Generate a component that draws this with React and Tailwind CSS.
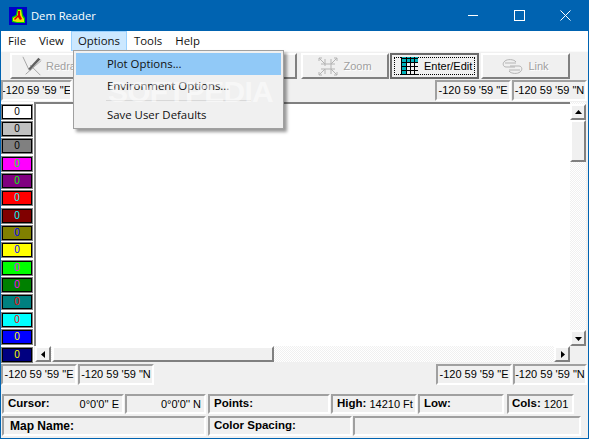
const swatches = [
  ["bg-[#ffffff]", "text-black"],
  ["bg-[#c0c0c0]", "text-black"],
  ["bg-[#808080]", "text-black"],
  ["bg-[#ff00ff]", "text-[#00ff00]"],
  ["bg-[#800080]", "text-[#00ff00]"],
  ["bg-[#ff0000]", "text-[#00ffff]"],
  ["bg-[#800000]", "text-[#00ffff]"],
  ["bg-[#808000]", "text-[#0000ff]"],
  ["bg-[#ffff00]", "text-[#0000ff]"],
  ["bg-[#00ff00]", "text-[#ff00ff]"],
  ["bg-[#008000]", "text-[#ff00ff]"],
  ["bg-[#008080]", "text-[#ff0000]"],
  ["bg-[#00ffff]", "text-[#ff0000]"],
  ["bg-[#0000ff]", "text-[#ffff00]"],
  ["bg-[#000080]", "text-[#ffff00]"],
];

const sunken = "border-2 border-t-[#a0a0a0] border-l-[#a0a0a0] border-r-white border-b-white";
const raised = "border-2 border-t-white border-l-white border-r-[#808080] border-b-[#808080]";

const AppIcon = () => (
  <svg width="18" height="18" viewBox="0 0 18 18" className="shrink-0">
    <rect width="18" height="18" fill="#0000c8" />
    <path d="M3 15 L3 10 L7 8 L8 2 L13 2 L14 8 L16 11 L16 16 L8 16 Z" fill="#00d000" />
    <path d="M4 14 L4 11 L8 9 L9 3 L12 3 L13 9 L15 12 L15 15 L8 15 Z" fill="#f0e000" />
    <path d="M9 4 L11 4 L11 8 L13 12 L11 13 L9 10 L6 13 L5 12 L9 8 Z" fill="#e00000" />
  </svg>
);

const RedrawIcon = () => (
  <svg width="22" height="22" viewBox="0 0 24 22" className="shrink-0">
    <path d="M1 1 L8 16 M4 20 L21 5 M9 10 L20 21" stroke="#a0a0a0" strokeWidth="1" fill="none" />
    <path d="M8 15 L19 3" stroke="#606060" strokeWidth="3" fill="none" />
    <path d="M9 16 L20 4" stroke="#c0c0c0" strokeWidth="1" fill="none" />
  </svg>
);

const ZoomIcon = () => (
  <svg width="20" height="21" viewBox="0 0 20 21" className="shrink-0" fill="none" stroke="#b4b4b4" strokeWidth="1">
    <path d="M7 8 L7 10 M13 8 L13 13 M7 13 L13 13 M7 8 L13 8" />
    <path d="M7 8 L1 2 L1 5 M1 2 L4 2 M7 3 L7 8 L3 8" />
    <path d="M13 8 L19 2 L19 5 M19 2 L16 2 M13 3 L13 8 L17 8" />
    <path d="M7 13 L1 19 L1 16 M1 19 L4 19 M7 18 L7 13 L3 13" />
    <path d="M13 13 L19 19 L19 16 M19 19 L16 19 M13 18 L13 13 L17 13" />
  </svg>
);

const GridIcon = () => (
  <svg width="18" height="18" viewBox="0 0 18 18" className="shrink-0">
    <rect x="1" y="0" width="5" height="18" fill="#00b4bc" />
    <rect x="1" y="0" width="17" height="5" fill="#00b4bc" />
    <path d="M1.5 0 V18 M6.5 0 V18 M10.5 0 V18 M14.5 0 V18 M1 1.5 H18 M1 5.5 H18 M1 9.5 H18 M1 13.5 H18 M1 17.5 H18" stroke="#000" strokeWidth="1" fill="none" />
  </svg>
);

const LinkIcon = () => (
  <svg width="21" height="15" viewBox="0 0 21 15" className="shrink-0" fill="none" stroke="#b4b4b4" strokeWidth="1">
    <path d="M14 3 C12 0 5 0 3 2 C0 4 1 8 4 8 L13 8" />
    <path d="M7 12 C9 15 16 15 18 13 C21 11 20 7 17 7 L8 7" />
    <path d="M3 4 H14 M7 11 H18" />
  </svg>
);

const ToolButton = ({ icon, label, className }) => (
  <div className={`${raised} ${className} h-[26px] flex items-center justify-center gap-[5px] text-[#a0a0a0]`}>
    {icon}
    {label && <span className="[text-shadow:1px_1px_0_#fff]">{label}</span>}
  </div>
);

const Coord = ({ children, className }) => (
  <div className={`${sunken} ${className} h-[21px] flex items-center justify-center whitespace-nowrap overflow-hidden`}>
    {children}
  </div>
);

const Cell = ({ className, children }) => (
  <div className={`${sunken} ${className} h-[20px] flex items-center whitespace-nowrap overflow-hidden`}>
    {children}
  </div>
);

const Label = ({ children }) => <b className="text-[11.5px]">{children}</b>;

const Arrow = ({ points }) => (
  <svg width="9" height="9" viewBox="0 0 9 9"><polygon points={points} fill="#000" /></svg>
);

const ScrollButton = ({ points, className }) => (
  <div className={`${raised} ${className} w-4 h-4 flex items-center justify-center shrink-0 bg-[#f0f0f0]`}>
    <Arrow points={points} />
  </div>
);

const OptionsMenu = () => (
  <div className="absolute left-[72px] top-[19px] z-10 w-[211px] h-[79px] bg-[#f0f0f0] border border-[#a0a0a0] shadow-[3px_3px_3px_rgba(0,0,0,0.4)] p-[2px] text-[11.4px] text-[#111] overflow-hidden">
    <div className="h-[22px] bg-[#91c9f7] flex items-center pl-[31px]">Plot Options...</div>
    <div className="h-[22px] flex items-center pl-[31px]">Environment Options...</div>
    <div className="h-px bg-[#d8d8d8] mx-[30px] my-[3px]"></div>
    <div className="h-[22px] flex items-center pl-[31px]">Save User Defaults</div>
    <div className="absolute left-[34px] top-[26px] font-['Liberation_Sans',sans-serif] font-bold text-[30px] leading-none tracking-tight text-white/50">
      SOFTPEDIA
    </div>
  </div>
);

export default function App() {
  return (
    <div className="w-[589px] h-[439px] bg-[#f0f0f0] border-x border-b border-[#0063b1] flex flex-col font-['Liberation_Sans',sans-serif] text-[11px] text-black overflow-hidden">
      <div className="h-[31px] bg-[#0063b1] flex items-center pl-2 text-white font-['Open_Sans',sans-serif] shrink-0">
        <AppIcon />
        <span className="ml-[4px] mt-[1px] text-[11.2px]">Dem Reader</span>
        <div className="ml-auto flex items-center h-full">
          <div className="w-[46px] h-full flex items-center justify-center">
            <div className="w-[10px] h-px bg-white"></div>
          </div>
          <div className="w-[46px] h-full flex items-center justify-center">
            <div className="w-[11px] h-[11px] border border-white"></div>
          </div>
          <div className="w-[46px] h-full flex items-center justify-center">
            <svg width="11" height="11" viewBox="0 0 11 11"><path d="M0.5 0.5 L10.5 10.5 M10.5 0.5 L0.5 10.5" stroke="#fff" strokeWidth="1" /></svg>
          </div>
        </div>
      </div>

      <div className="relative h-[20px] bg-white flex items-center pl-[1px] font-['Open_Sans',sans-serif] text-[11.4px] text-[#111] shrink-0">
        <div className="px-[6px]">File</div>
        <div className="px-[6px] ml-[1px]">View</div>
        <div className="h-full px-[6px] ml-[1px] flex items-center bg-[#cce8ff] border border-[#99d1ff]">Options</div>
        <div className="px-[6px] ml-[1px]">Tools</div>
        <div className="px-[6px] ml-[1px]">Help</div>
        <OptionsMenu />
      </div>

      <div className="h-[29px] border-t border-[#fafafa] flex items-center pl-[9px] shrink-0">
        <ToolButton className="w-[89px] justify-start! gap-[2px]! pl-[10px]" icon={<RedrawIcon />} label="Redraw" />
        <ToolButton className="w-[99px] ml-[1px]" />
        <ToolButton className="w-[97px] ml-[1px]" />
        <ToolButton className="w-[88px] ml-[4px]" icon={<ZoomIcon />} label="Zoom" />
        <div className="w-[89px] h-[26px] ml-[1px] border-2 border-[#696969] p-[2px]">
          <div className="h-full border border-dotted border-black flex items-center gap-[6px] pl-[5px]">
            <GridIcon />
            <span>Enter/Edit</span>
          </div>
        </div>
        <ToolButton className="w-[89px] ml-[2px]" icon={<LinkIcon />} label="Link" />
      </div>

      <div className="h-[22px] flex items-start justify-between shrink-0">
        <Coord className="w-[71px]">-120 59 '59 "E</Coord>
        <div className="flex gap-[1px] mr-[1px]">
          <Coord className="w-[76px]">-120 59 '59 "E</Coord>
          <Coord className="w-[75px]">-120 59 '59 "N</Coord>
        </div>
      </div>

      <div className="h-[260px] flex shrink-0">
        <div className="w-[33px] bg-white flex flex-col gap-[1.36px] pr-[1px] pt-[1.5px] shrink-0">
          {swatches.map(([bg, fg], i) => (
            <div key={i} className="h-4 border border-[#808080] shrink-0">
              <div className={`${bg} ${fg} h-full border border-black flex items-center justify-center text-[10px] leading-none`}>
                0
              </div>
            </div>
          ))}
        </div>
        <div className="flex-1 flex flex-col pr-[2px] min-w-0">
          <div className="flex-1 flex min-h-0">
            <div className="flex-1 bg-white border-t-2 border-l-2 border-[#808080]"></div>
            <div className="w-4 flex flex-col pt-[2px] bg-[repeating-conic-gradient(#f0f0f0_0_25%,#ffffff_0_50%)] bg-[length:2px_2px]">
              <ScrollButton points="4.5,2 8,6 1,6" />
              <div className={`${raised} h-[42px] bg-[#f0f0f0]`}></div>
              <div className="flex-1"></div>
              <ScrollButton points="1,3 8,3 4.5,7" />
            </div>
          </div>
          <div className="h-4 flex pl-[1px] shrink-0">
            <ScrollButton points="6,1 6,8 2,4.5" />
            <div className="flex-1 flex bg-[repeating-conic-gradient(#f0f0f0_0_25%,#ffffff_0_50%)] bg-[length:2px_2px]">
              <div className={`${raised} w-[222px] ml-[1px] bg-[#f0f0f0]`}></div>
            </div>
            <ScrollButton points="3,1 3,8 7,4.5" />
            <div className="w-4"></div>
          </div>
        </div>
      </div>

      <div className="h-[23px] flex items-end justify-between pr-[1px] shrink-0">
        <div className="flex gap-[1px]">
          <Coord className="w-[76px]">-120 59 '59 "E</Coord>
          <Coord className="w-[76px]">-120 59 '59 "N</Coord>
        </div>
        <div className="flex gap-[1px]">
          <Coord className="w-[76px]">-120 59 '59 "E</Coord>
          <Coord className="w-[74px]">-120 59 '59 "N</Coord>
        </div>
      </div>

      <div className="mt-[9px] flex flex-col gap-[2px] pl-[1px]">
        <div className="flex">
          <Cell className="w-[122px] justify-between pl-[4px] pr-[3px]">
            <Label>Cursor:</Label><span>0°0'0'' E</span>
          </Cell>
          <Cell className="w-[81px] justify-end pr-[3px] ml-[1px]">0°0'0'' N</Cell>
          <Cell className="w-[122px] pl-[4px] ml-[2px]"><Label>Points:</Label></Cell>
          <Cell className="w-[86px] pl-[4px] ml-[1px]"><Label>High:</Label>&nbsp;14210 Ft</Cell>
          <Cell className="w-[86px] pl-[4px] ml-[1px]"><Label>Low:</Label></Cell>
          <Cell className="w-[67px] pl-[3px] ml-[3px]"><Label>Cols:</Label>&nbsp;1201</Cell>
        </div>
        <div className="flex">
          <Cell className="w-[204px] pl-[6px]"><b className="text-[12px]">Map Name:</b></Cell>
          <Cell className="w-[144px] pl-[4px] ml-[2px]"><Label>Color Spacing:</Label></Cell>
          <Cell className="w-[228px] ml-[1px]"></Cell>
        </div>
      </div>
    </div>
  );
}
